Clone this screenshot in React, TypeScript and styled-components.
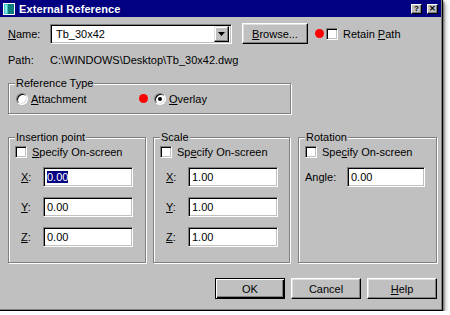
import React from "react";
import styled, { createGlobalStyle, css } from "styled-components";

const Global = createGlobalStyle`
  html, body { margin: 0; padding: 0; background: #ffffff; }
  body { font-family: "Liberation Sans", Arial, sans-serif; font-size: 11px; color: #000; }
  * { box-sizing: border-box; }
`;

const Window = styled.div`
  width: 443px;
  height: 311px;
  background: #c0c0c0;
  display: flex;
  flex-direction: column;
  box-shadow: inset -1px -1px 0 #000, inset -2px -2px 0 #808080,
    1px 1px 2px rgba(0, 0, 0, 0.55), 3px 3px 4px rgba(0, 0, 0, 0.25);
`;

const TitleBar = styled.div`
  width: 441px;
  height: 17px;
  background: #000080;
  display: flex;
  align-items: center;
  padding: 0 3px 0 3px;
  gap: 4px;
`;

const TitleText = styled.div`
  color: #fff;
  font-weight: bold;
  font-size: 11px;
  flex: 1;
  letter-spacing: 0.1px;
`;

const TitleBtn = styled.div`
  width: 11px;
  height: 10px;
  background: #c0c0c0;
  border: 1px solid;
  border-color: #fff #000 #000 #fff;
  box-shadow: inset -1px -1px 0 #808080;
  display: flex;
  align-items: center;
  justify-content: center;
  font-size: 8px;
  font-weight: bold;
  line-height: 1;
  margin-left: 1px;
`;

const Body = styled.div`
  padding: 6px 6px 0 8px;
  display: flex;
  flex-direction: column;
`;

const Row = styled.div<{ $mt?: number; $h?: number }>`
  display: flex;
  align-items: center;
  margin-top: ${(p) => p.$mt ?? 0}px;
  height: ${(p) => p.$h ?? 20}px;
`;

const Label = styled.span<{ $w?: number; $ml?: number }>`
  display: inline-block;
  white-space: nowrap;
  ${(p) => p.$w !== undefined && css`width: ${p.$w}px; flex: none;`}
  margin-left: ${(p) => p.$ml ?? 0}px;
`;

const sunken = css`
  background: #fff;
  border: 1px solid;
  border-color: #808080 #fff #fff #808080;
  box-shadow: inset 1px 1px 0 #000, inset -1px -1px 0 #c0c0c0;
`;

const Combo = styled.div`
  ${sunken};
  width: 182px;
  height: 20px;
  display: flex;
  align-items: center;
  padding: 0 2px 0 5px;
`;

const ComboText = styled.span`
  flex: 1;
`;

const DropBtn = styled.div`
  width: 15px;
  height: 16px;
  background: #c0c0c0;
  border: 1px solid;
  border-color: #dfdfdf #000 #000 #dfdfdf;
  box-shadow: inset -1px -1px 0 #808080, inset 1px 1px 0 #fff;
  display: flex;
  align-items: center;
  justify-content: center;
`;

const Button = styled.div<{ $w: number; $default?: boolean; $ml?: number }>`
  width: ${(p) => p.$w}px;
  height: 21px;
  margin-left: ${(p) => p.$ml ?? 0}px;
  background: #c0c0c0;
  display: flex;
  align-items: center;
  justify-content: center;
  border: 1px solid;
  border-color: #fff #000 #000 #fff;
  box-shadow: inset -1px -1px 0 #808080, inset 1px 1px 0 #dfdfdf;
  flex: none;
  ${(p) =>
    p.$default &&
    css`
      border: 1px solid #000;
      box-shadow: inset 1px 1px 0 #fff, inset -1px -1px 0 #000,
        inset -2px -2px 0 #808080;
    `}
`;

const RedDot = styled.div<{ $ml?: number }>`
  width: 9px;
  height: 9px;
  border-radius: 50%;
  background: #ff0000;
  margin-left: ${(p) => p.$ml ?? 0}px;
  flex: none;
`;

const Check = styled.div<{ $ml?: number }>`
  ${sunken};
  width: 12px;
  height: 12px;
  flex: none;
  margin-left: ${(p) => p.$ml ?? 0}px;
`;

const Radio = styled.div<{ $on?: boolean; $ml?: number }>`
  width: 12px;
  height: 12px;
  border-radius: 50%;
  flex: none;
  margin-left: ${(p) => p.$ml ?? 0}px;
  background: #fff;
  border: 1px solid;
  border-color: #808080 #fff #fff #808080;
  box-shadow: inset 1px 1px 0 #000, inset -1px -1px 0 #dfdfdf;
  display: flex;
  align-items: center;
  justify-content: center;
  &::after {
    content: "";
    width: 4px;
    height: 4px;
    border-radius: 50%;
    background: ${(p) => (p.$on ? "#000" : "transparent")};
  }
`;

const Group = styled.div<{ $w: number; $h: number; $mt?: number; $ml?: number }>`
  position: relative;
  width: ${(p) => p.$w}px;
  height: ${(p) => p.$h}px;
  margin-top: ${(p) => p.$mt ?? 0}px;
  margin-left: ${(p) => p.$ml ?? 0}px;
  flex: none;
  border: 1px solid #808080;
  box-shadow: inset 1px 1px 0 #fff, 1px 1px 0 #fff;
`;

const GroupTitle = styled.span`
  position: absolute;
  top: -8px;
  left: 6px;
  padding: 0 1px;
  background: #c0c0c0;
  line-height: 14px;
`;

const GroupInner = styled.div`
  padding: 8px 0 0 6px;
  display: flex;
  flex-direction: column;
`;

const RadioRow = styled.div`
  display: flex;
  align-items: center;
  height: 100%;
  padding-left: 7px;
`;

const RadioOption = styled.div<{ $w?: number }>`
  display: flex;
  align-items: center;
  gap: 3px;
  ${(p) => p.$w && css`width: ${p.$w}px;`}
`;

const CheckRow = styled.div`
  display: flex;
  align-items: center;
  height: 12px;
  gap: 5px;
`;

const FieldRow = styled.div<{ $mt: number; $lw: number; $lo: number }>`
  display: flex;
  align-items: center;
  height: 20px;
  margin-top: ${(p) => p.$mt}px;
  padding-left: ${(p) => p.$lo}px;
  & > span:first-child {
    width: ${(p) => p.$lw}px;
    flex: none;
  }
`;

const Input = styled.div<{ $w: number }>`
  ${sunken};
  width: ${(p) => p.$w}px;
  height: 20px;
  display: flex;
  align-items: center;
  padding-left: 3px;
`;

const Selected = styled.span`
  background: #000080;
  color: #fff;
`;

const GroupsRow = styled.div`
  display: flex;
  margin-top: 23px;
`;

const ButtonsRow = styled.div`
  display: flex;
  justify-content: flex-end;
  margin-top: 15px;
`;

const U = styled.span`
  text-decoration: underline;
`;

const AppIcon = () => (
  <svg width="12" height="12" viewBox="0 0 12 12">
    <rect x="0.5" y="0.5" width="11" height="11" fill="#c0c0c0" stroke="#fff" />
    <rect x="1" y="1" width="4" height="10" fill="#3ec6c6" />
    <rect x="5" y="1" width="6" height="10" fill="#0c7c7c" />
    <rect x="2" y="2" width="2" height="8" fill="#8fe8e8" />
  </svg>
);

const Arrow = () => (
  <svg width="7" height="4" viewBox="0 0 7 4">
    <path d="M0 0h7L3.5 4z" fill="#000" />
  </svg>
);

const InsertionGroup = () => (
  <Group $w={138} $h={126}>
    <GroupTitle>Insertion point</GroupTitle>
    <GroupInner>
      <CheckRow>
        <Check />
        <span>
          <U>S</U>pecify On-screen
        </span>
      </CheckRow>
      <FieldRow $mt={9} $lw={22} $lo={6}>
        <span>
          <U>X</U>:
        </span>
        <Input $w={90}>
          <Selected>0.00</Selected>
        </Input>
      </FieldRow>
      <FieldRow $mt={10} $lw={22} $lo={6}>
        <span>
          <U>Y</U>:
        </span>
        <Input $w={90}>0.00</Input>
      </FieldRow>
      <FieldRow $mt={10} $lw={22} $lo={6}>
        <span>
          <U>Z</U>:
        </span>
        <Input $w={90}>0.00</Input>
      </FieldRow>
    </GroupInner>
  </Group>
);

const ScaleGroup = () => (
  <Group $w={137} $h={126} $ml={7}>
    <GroupTitle>Scale</GroupTitle>
    <GroupInner>
      <CheckRow>
        <Check />
        <span>
          Sp<U>e</U>cify On-screen
        </span>
      </CheckRow>
      {["X", "Y", "Z"].map((k, i) => (
        <FieldRow key={k} $mt={i === 0 ? 9 : 10} $lw={22} $lo={6}>
          <span>
            <U>{k}</U>:
          </span>
          <Input $w={90}>1.00</Input>
        </FieldRow>
      ))}
    </GroupInner>
  </Group>
);

const RotationGroup = () => (
  <Group $w={139} $h={126} $ml={8}>
    <GroupTitle>Rotation</GroupTitle>
    <GroupInner>
      <CheckRow>
        <Check />
        <span>
          Spe<U>c</U>ify On-screen
        </span>
      </CheckRow>
      <FieldRow $mt={9} $lw={42} $lo={0}>
        <span>Angle:</span>
        <Input $w={78}>0.00</Input>
      </FieldRow>
    </GroupInner>
  </Group>
);

export default function App() {
  return (
    <>
      <Global />
      <Window>
        <TitleBar>
          <AppIcon />
          <TitleText>External Reference</TitleText>
          <TitleBtn>?</TitleBtn>
          <TitleBtn>✕</TitleBtn>
        </TitleBar>
        <Body>
          <Row $h={21}>
            <Label $w={42}>
              <U>N</U>ame:
            </Label>
            <Combo>
              <ComboText>Tb_30x42</ComboText>
              <DropBtn>
                <Arrow />
              </DropBtn>
            </Combo>
            <Button $w={66} $ml={10}>
              <span>
                <U>B</U>rowse...
              </span>
            </Button>
            <RedDot $ml={7} />
            <Check $ml={2} />
            <Label $ml={5}>
              Retain <U>P</U>ath
            </Label>
          </Row>
          <Row $mt={9} $h={14}>
            <Label $w={42}>Path:</Label>
            <Label>C:\WINDOWS\Desktop\Tb_30x42.dwg</Label>
          </Row>
          <Group $w={283} $h={31} $mt={16}>
            <GroupTitle>Reference Type</GroupTitle>
            <RadioRow>
              <RadioOption $w={123}>
                <Radio />
                <span>
                  <U>A</U>ttachment
                </span>
              </RadioOption>
              <RedDot />
              <RadioOption>
                <Radio $on $ml={6} />
                <span>
                  <U>O</U>verlay
                </span>
              </RadioOption>
            </RadioRow>
          </Group>
          <GroupsRow>
            <InsertionGroup />
            <ScaleGroup />
            <RotationGroup />
          </GroupsRow>
          <ButtonsRow>
            <Button $w={70} $default>
              OK
            </Button>
            <Button $w={70} $ml={6}>
              Cancel
            </Button>
            <Button $w={70} $ml={6}>
              <span>
                <U>H</U>elp
              </span>
            </Button>
          </ButtonsRow>
        </Body>
      </Window>
    </>
  );
}
